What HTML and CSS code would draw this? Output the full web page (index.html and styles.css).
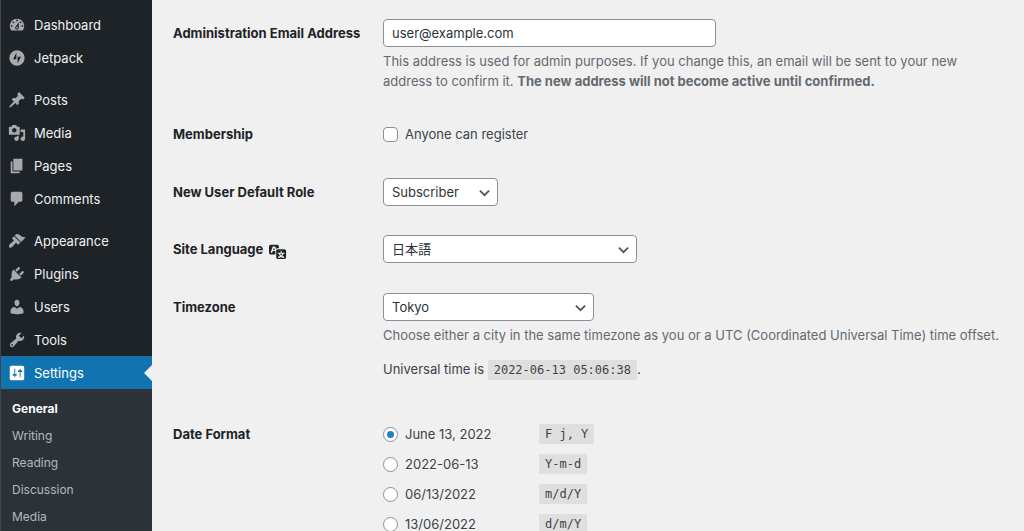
FILE: index.html
```html
<!DOCTYPE html>
<html lang="en">
<head>
    <meta charset="UTF-8">
    <meta name="viewport" content="width=device-width, initial-scale=1.0">
    <title>General Settings</title>
    <link rel="stylesheet" href="styles.css">
</head>
<body>
    <!-- Admin menu -->
    <nav class="admin-menu" aria-label="Main menu">
        <ul class="menu-group">
            <li><a href="#" class="menu-item">
                <svg class="icon" viewBox="0 0 20 20"><path fill-rule="evenodd" d="M3.76 16h12.48c1.1-1.37 1.76-3.11 1.76-5 0-4.42-3.58-8-8-8s-8 3.58-8 8c0 1.89.66 3.63 1.76 5zM10 4c.55 0 1 .45 1 1s-.45 1-1 1-1-.45-1-1 .45-1 1-1zM6 6c.55 0 1 .45 1 1s-.45 1-1 1-1-.45-1-1 .45-1 1-1zm8 0c.55 0 1 .45 1 1s-.45 1-1 1-1-.45-1-1 .45-1 1-1zm-5.37 5.55L12 7v6c0 1.1-.9 2-2 2s-2-.9-2-2c0-.57.24-1.08.63-1.45zM4 10c.55 0 1 .45 1 1s-.45 1-1 1-1-.45-1-1 .45-1 1-1zm12 0c.55 0 1 .45 1 1s-.45 1-1 1-1-.45-1-1 .45-1 1-1zm-5 3c0-.55-.45-1-1-1s-1 .45-1 1 .45 1 1 1 1-.45 1-1z"/></svg>
                Dashboard</a></li>
            <li><a href="#" class="menu-item">
                <svg class="icon" viewBox="0 0 20 20"><path fill-rule="evenodd" d="M10 1.5a8.5 8.5 0 1 0 0 17 8.5 8.5 0 0 0 0-17zM9.3 11.5H5.6l3.7-7.3v7.3zM10.7 15.8V8.5h3.7l-3.7 7.3z"/></svg>
                Jetpack</a></li>
        </ul>
        <ul class="menu-group">
            <li><a href="#" class="menu-item">
                <svg class="icon" viewBox="0 0 20 20"><path d="M10.44 3.02l1.82-1.82 6.36 6.35-1.83 1.82c-1.05-.68-2.48-.57-3.41.36l-.75.75c-.92.93-1.04 2.35-.35 3.41l-1.83 1.82-2.41-2.41-2.8 2.79c-.42.42-3.38 2.71-3.8 2.29s1.86-3.39 2.28-3.81l2.79-2.79L4.1 9.36l1.83-1.82c1.05.69 2.48.57 3.4-.36l.75-.75c.93-.92 1.05-2.35.36-3.41z"/></svg>
                Posts</a></li>
            <li><a href="#" class="menu-item">
                <svg class="icon" viewBox="0 0 20 20"><path fill-rule="evenodd" d="M13 11V4c0-.55-.45-1-1-1h-1.67L9 1H5L3.67 3H2c-.55 0-1 .45-1 1v7c0 .55.45 1 1 1h10c.55 0 1-.45 1-1zM7 4.5c1.38 0 2.5 1.12 2.5 2.5S8.38 9.5 7 9.5 4.5 8.38 4.5 7 5.62 4.5 7 4.5zM14 6h5v10.5c0 1.38-1.12 2.5-2.5 2.5S14 17.88 14 16.5s1.12-2.5 2.5-2.5c.17 0 .34.02.5.05V9h-3V6zm-4 8.05V13h2v3.5c0 1.38-1.12 2.5-2.5 2.5S7 17.88 7 16.5 8.12 14 9.5 14c.17 0 .34.02.5.05z"/></svg>
                Media</a></li>
            <li><a href="#" class="menu-item">
                <svg class="icon" viewBox="0 0 20 20"><path d="M6 15V2h10v13H6zm-1 1h8v2H3V5h2v11z"/></svg>
                Pages</a></li>
            <li><a href="#" class="menu-item">
                <svg class="icon" viewBox="0 0 20 20"><path d="M5 2h9c1.1 0 2 .9 2 2v7c0 1.1-.9 2-2 2h-2l-5 5v-5H5c-1.1 0-2-.9-2-2V4c0-1.1.9-2 2-2z"/></svg>
                Comments</a></li>
        </ul>
        <ul class="menu-group">
            <li><a href="#" class="menu-item">
                <svg class="icon" viewBox="0 0 20 20"><path d="M14.48 11.06L7.41 3.99l1.5-1.5c.5-.56 2.3-.47 3.51.32 1.21.8 1.43 1.28 2.91 2.1 1.18.64 2.45 1.26 4.45.85zm-.71.71L6.7 4.7 4.93 6.47c-.39.39-.39 1.02 0 1.41l1.06 1.06c.39.39.39 1.03 0 1.42-.6.6-1.43 1.11-2.21 1.69-.35.26-.7.53-1.01.84C1.43 14.23.4 16.08 1.4 17.07c.99 1 2.84-.03 4.18-1.36.31-.31.58-.66.85-1.02.57-.78 1.08-1.61 1.69-2.21.39-.39 1.02-.39 1.41 0l1.06 1.06c.39.39 1.02.39 1.41 0z"/></svg>
                Appearance</a></li>
            <li><a href="#" class="menu-item">
                <svg class="icon" viewBox="0 0 20 20"><path d="M13.11 4.36L9.87 7.6 8 5.73l3.24-3.24c.35-.34 1.05-.2 1.56.32.52.51.66 1.21.31 1.55zm-8 1.77l.91-1.12 9.01 9.01-1.19.84c-.71.71-2.63 1.16-3.82 1.16H6.14L4.9 17.26c-.59.59-1.54.59-2.12 0-.59-.58-.59-1.53 0-2.12l1.24-1.24v-3.88c0-1.13.4-3.19 1.09-3.89zm7.26 3.97l3.24-3.24c.34-.35 1.04-.21 1.55.31.52.51.66 1.21.31 1.55l-3.24 3.25z"/></svg>
                Plugins</a></li>
            <li><a href="#" class="menu-item">
                <svg class="icon" viewBox="0 0 20 20"><path d="M10 9.25c-2.27 0-2.73-3.44-2.73-3.44C7 4.02 7.82 2 9.97 2c2.16 0 2.98 2.02 2.71 3.81 0 0-.41 3.44-2.68 3.44zm0 2.57L12.72 10c2.39 0 4.52 2.33 4.52 4.53v2.49s-3.65 1.13-7.24 1.13c-3.65 0-7.24-1.13-7.24-1.13v-2.49c0-2.25 1.94-4.48 4.47-4.48z"/></svg>
                Users</a></li>
            <li><a href="#" class="menu-item">
                <svg class="icon" viewBox="0 0 20 20"><path fill-rule="evenodd" d="M16.68 9.77c-1.34 1.34-3.3 1.67-4.95.99l-5.41 6.52c-.99.99-2.59.99-3.58 0s-.99-2.59 0-3.57l6.52-5.42c-.68-1.65-.35-3.61.99-4.95 1.28-1.28 3.12-1.62 4.72-1.06l-2.89 2.89 2.82 2.82 2.86-2.87c.53 1.58.18 3.39-1.08 4.65zM3.81 16.21c.4.39 1.04.39 1.43 0 .4-.4.4-1.04 0-1.43-.39-.4-1.03-.4-1.43 0-.39.39-.39 1.03 0 1.43z"/></svg>
                Tools</a></li>
            <li><a href="#" class="menu-item current">
                <svg class="icon" viewBox="0 0 20 20"><path fill-rule="evenodd" d="M18 16V4c0-1.1-.9-2-2-2H4c-1.1 0-2 .9-2 2v12c0 1.1.9 2 2 2h12c1.1 0 2-.9 2-2zM8 11h1c.55 0 1 .45 1 1s-.45 1-1 1H8v1.5c0 .28-.22.5-.5.5s-.5-.22-.5-.5V13H6c-.55 0-1-.45-1-1s.45-1 1-1h1V5.5c0-.28.22-.5.5-.5s.5.22.5.5V11zm5-2h-1c-.55 0-1-.45-1-1s.45-1 1-1h1V5.5c0-.28.22-.5.5-.5s.5.22.5.5V7h1c.55 0 1 .45 1 1s-.45 1-1 1h-1v5.5c0 .28-.22.5-.5.5s-.5-.22-.5-.5V9z"/></svg>
                Settings</a></li>
        </ul>
        <ul class="submenu">
            <li><a href="#" class="active">General</a></li>
            <li><a href="#">Writing</a></li>
            <li><a href="#">Reading</a></li>
            <li><a href="#">Discussion</a></li>
            <li><a href="#">Media</a></li>
        </ul>
    </nav>

    <!-- Settings form -->
    <main class="content">
        <form>
            <div class="form-row">
                <label class="row-label" for="admin-email">Administration Email Address</label>
                <div>
                    <input type="email" id="admin-email" class="field email" value="user@example.com">
                    <p class="description">This address is used for admin purposes. If you change this, an email will be sent to your new address to confirm it. <strong>The new address will not become active until confirmed.</strong></p>
                </div>
            </div>

            <div class="form-row">
                <span class="row-label">Membership</span>
                <div>
                    <label class="check"><input type="checkbox"> Anyone can register</label>
                </div>
            </div>

            <div class="form-row">
                <label class="row-label" for="role">New User Default Role</label>
                <div>
                    <select id="role" class="field role">
                        <option>Subscriber</option>
                    </select>
                </div>
            </div>

            <div class="form-row">
                <label class="row-label" for="language">Site Language
                    <svg class="icon-lang" viewBox="0 0 20 20"><path fill-rule="evenodd" d="M11 7H9.49c-.63 0-1.25.3-1.59.7L7 5H4.13l-2.39 7h1.69l.74-2H7v4H2c-1.1 0-2-.9-2-2V5c0-1.1.9-2 2-2h7c1.1 0 2 .9 2 2v2zM6.51 9H4.49l1-2.93zM10 8h7c1.1 0 2 .9 2 2v7c0 1.1-.9 2-2 2h-7c-1.1 0-2-.9-2-2v-7c0-1.1.9-2 2-2zm7.25 5v-1.08h-3.17V9.75h-1.16v2.17H9.75V13h1.28c.11.85.56 1.85 1.28 2.62-.87.36-1.89.62-2.31.62-.01.02.22.97.2 1.46.84 0 2.21-.5 3.28-1.15 1.09.65 2.48 1.15 3.34 1.15-.02-.49.2-1.44.2-1.46-.43 0-1.49-.27-2.38-.63.7-.77 1.14-1.77 1.25-2.61h1.36zm-3.81 1.93c-.5-.46-.85-1.13-1.01-1.93h2.09c-.17.8-.51 1.47-1 1.93l-.04.03s-.03-.02-.04-.03z"/></svg>
                </label>
                <div>
                    <select id="language" class="field language">
                        <option lang="ja">日本語</option>
                    </select>
                </div>
            </div>

            <div class="form-row">
                <label class="row-label" for="timezone">Timezone</label>
                <div>
                    <select id="timezone" class="field timezone">
                        <option>Tokyo</option>
                    </select>
                    <p class="description">Choose either a city in the same timezone as you or a UTC (Coordinated Universal Time) time offset.</p>
                    <p class="utc">Universal time is <code>2022-06-13 05:06:38</code>.</p>
                </div>
            </div>

            <div class="form-row date-row">
                <span class="row-label">Date Format</span>
                <div class="date-options" role="radiogroup" aria-label="Date Format">
                    <label class="date-option"><input type="radio" name="date" checked><span>June 13, 2022</span><code>F j, Y</code></label>
                    <label class="date-option"><input type="radio" name="date"><span>2022-06-13</span><code>Y-m-d</code></label>
                    <label class="date-option"><input type="radio" name="date"><span>06/13/2022</span><code>m/d/Y</code></label>
                    <label class="date-option"><input type="radio" name="date"><span>13/06/2022</span><code>d/m/Y</code></label>
                </div>
            </div>
        </form>
    </main>
</body>
</html>
```
FILE: styles.css
```css
* {
    margin: 0;
    padding: 0;
    box-sizing: border-box;
}

body {
    display: flex;
    min-height: 100vh;
    background: #f0f0f0;
    color: #3c434a;
    font-family: Inter, "Noto Sans CJK JP", sans-serif;
    font-size: 13px;
    line-height: 20px;
}

a {
    text-decoration: none;
}

ul {
    list-style: none;
}

/* Admin menu */
.admin-menu {
    display: flex;
    flex-direction: column;
    flex: none;
    width: 152px;
    padding-top: 8px;
    border-left: 1px solid #3f4549;
    background: #1d2327;
}

.menu-group + .menu-group {
    margin-top: 9px;
}

.menu-item {
    position: relative;
    display: flex;
    align-items: center;
    gap: 8px;
    height: 33px;
    padding-left: 7px;
    color: #f0f0f1;
}

.icon {
    width: 18px;
    height: 18px;
    fill: #a7aaad;
}

.current {
    background: #1174b1;
    color: #fff;
}

.current .icon {
    fill: #fff;
}

.current::after {
    content: "";
    position: absolute;
    right: 0;
    top: 9px;
    border: 8px solid transparent;
    border-left: 0;
    border-right-color: #f0f0f0;
}

.submenu {
    flex: 1;
    padding-top: 6px;
    background: #2c3338;
}

.submenu a {
    display: block;
    padding-left: 11px;
    font-size: 12px;
    line-height: 27px;
    color: #b4b9be;
}

.submenu .active {
    color: #fff;
    font-weight: 700;
}

/* Settings form */
.content {
    flex: 1;
    padding: 4px 20px 0 21px;
}

.form-row {
    display: grid;
    grid-template-columns: 210px 1fr;
    padding: 15px 0 14px;
}

.row-label {
    padding: 4px 0;
    color: #1d2327;
    font-weight: 700;
}

.date-row .row-label {
    padding-top: 0;
}

.icon-lang {
    width: 18px;
    height: 18px;
    margin-left: 3px;
    vertical-align: -6px;
    fill: #1d2327;
}

.field {
    display: block;
    height: 28px;
    padding: 0 8px;
    border: 1px solid #8c8f94;
    border-radius: 4px;
    background-color: #fff;
    color: #2c3338;
    font: inherit;
}

select.field {
    appearance: none;
    background-image: url("data:image/svg+xml,%3Csvg xmlns='http://www.w3.org/2000/svg' viewBox='0 0 12 12'%3E%3Cpath d='M1 4l5 5 5-5' fill='none' stroke='%2350575e' stroke-width='2'/%3E%3C/svg%3E");
    background-repeat: no-repeat;
    background-position: right 7px center;
    background-size: 11px;
}

.email {
    width: 333px;
}

.role {
    width: 115px;
}

.language {
    width: 254px;
}

.timezone {
    width: 211px;
}

.description {
    margin-top: 4px;
    color: #646970;
}

.description strong {
    font-weight: 700;
}

.utc {
    margin: 14px 0 16px;
}

code {
    padding: 3px 6px;
    background: #dfdfe0;
    font-family: "DejaVu Sans Mono", monospace;
    font-size: 12px;
    line-height: 14px;
}

.check {
    display: flex;
    align-items: center;
    gap: 7px;
    padding: 4px 0 5px;
}

input[type="checkbox"],
input[type="radio"] {
    appearance: none;
    display: grid;
    place-items: center;
    width: 15px;
    height: 15px;
    border: 1px solid #8c8f94;
    border-radius: 4px;
    background: #fff;
}

input[type="radio"] {
    border-radius: 50%;
}

input[type="radio"]:checked::before {
    content: "";
    width: 7px;
    height: 7px;
    border-radius: 50%;
    background: #2180c4;
}

/* One radio per format, with its PHP date string */
.date-options {
    display: grid;
    gap: 10px;
}

.date-option {
    display: grid;
    grid-template-columns: 15px 127px auto;
    gap: 7px;
    align-items: center;
    justify-content: start;
    height: 20px;
}
```
